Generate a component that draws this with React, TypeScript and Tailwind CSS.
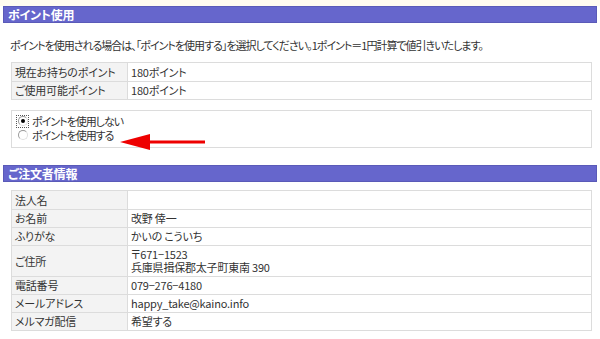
import React from 'react'

const font = { fontFamily: '"Noto Sans CJK JP", "Noto Sans", sans-serif' }

function Row({ label, children, h = 'h-[18px]' }: { label: string; children?: React.ReactNode; h?: string }) {
  return (
    <div className={`flex ${h} border-t border-[#dcdcdc] first:border-t-0`}>
      <div className="w-[116px] shrink-0 bg-[#f3f3f3] border-r border-[#dcdcdc] pl-[3px] flex items-center">
        {label}
      </div>
      <div className="flex-1 pl-[3px] flex flex-col justify-center">{children}</div>
    </div>
  )
}

function Radio({ checked, label }: { checked?: boolean; label: string }) {
  return (
    <div className="flex items-center h-[14px]">
      <span
        className={`w-[13px] h-[13px] flex items-center justify-center ${
          checked ? 'border border-dotted border-[#555]' : ''
        }`}
      >
        <span className="w-[10px] h-[10px] rounded-full border border-[#9a9a9a] border-b-[#e0e0e0] border-r-[#e0e0e0] bg-white flex items-center justify-center">
          {checked && <span className="w-[4px] h-[4px] rounded-full bg-black" />}
        </span>
      </span>
      <span className="ml-[3px] leading-[14px] tracking-[-1px]">{label}</span>
    </div>
  )
}

export default function App() {
  return (
    <div
      className="relative w-[600px] h-[339px] overflow-hidden bg-white text-[11px] text-[#333] [font-feature-settings:'palt'] tracking-[-0.2px]"
      style={font}
    >
      <div className="h-[6px] bg-[#fffbf0]" />

      {/* ポイント使用 */}
      <div className="mx-[3px] h-[17px] bg-[#6666cc] border border-[#5a5ab8] text-white font-bold text-[12px] leading-[15px] pl-[4px]">
        ポイント使用
      </div>

      <p className="pl-[10px] mt-[15px] leading-[14px] tracking-[-1px]">
        ポイントを使用される場合は、「ポイントを使用する」を選択してください。1ポイント＝1円計算で値引きいたします。
      </p>

      <div className="ml-[11px] w-[581px] mt-[10px] border border-[#dcdcdc]">
        <Row label="現在お持ちのポイント">180ポイント</Row>
        <Row label="ご使用可能ポイント">180ポイント</Row>
      </div>

      <div className="ml-[11px] w-[581px] mt-[10px] h-[38px] border border-[#dcdcdc] pl-[4px] pt-[3px]">
        <Radio checked label="ポイントを使用しない" />
        <Radio label="ポイントを使用する" />
      </div>

      {/* ご注文者情報 */}
      <div className="mx-[3px] mt-[17px] h-[17px] bg-[#6666cc] border border-[#5a5ab8] text-white font-bold text-[12px] leading-[15px] pl-[4px]">
        ご注文者情報
      </div>

      <div className="ml-[11px] w-[581px] mt-[8px] border border-[#dcdcdc]">
        <Row label="法人名" />
        <Row label="お名前">改野 倖一</Row>
        <Row label="ふりがな">かいの こういち</Row>
        <Row label="ご住所" h="h-[31px]">
          <div className="leading-[13px]">〒671−1523</div>
          <div className="leading-[13px]">兵庫県揖保郡太子町東南 390</div>
        </Row>
        <Row label="電話番号">079−276−4180</Row>
        <Row label="メールアドレス">happy_take@kaino.info</Row>
        <Row label="メルマガ配信">希望する</Row>
      </div>

      {/* red arrow */}
      <svg className="absolute left-[118px] top-[132px]" width="90" height="20" viewBox="0 0 90 20">
        <polygon points="2,10 32,2 32,18" fill="#ee0000" />
        <rect x="30" y="8.5" width="57" height="3" fill="#ee0000" />
      </svg>
    </div>
  )
}
